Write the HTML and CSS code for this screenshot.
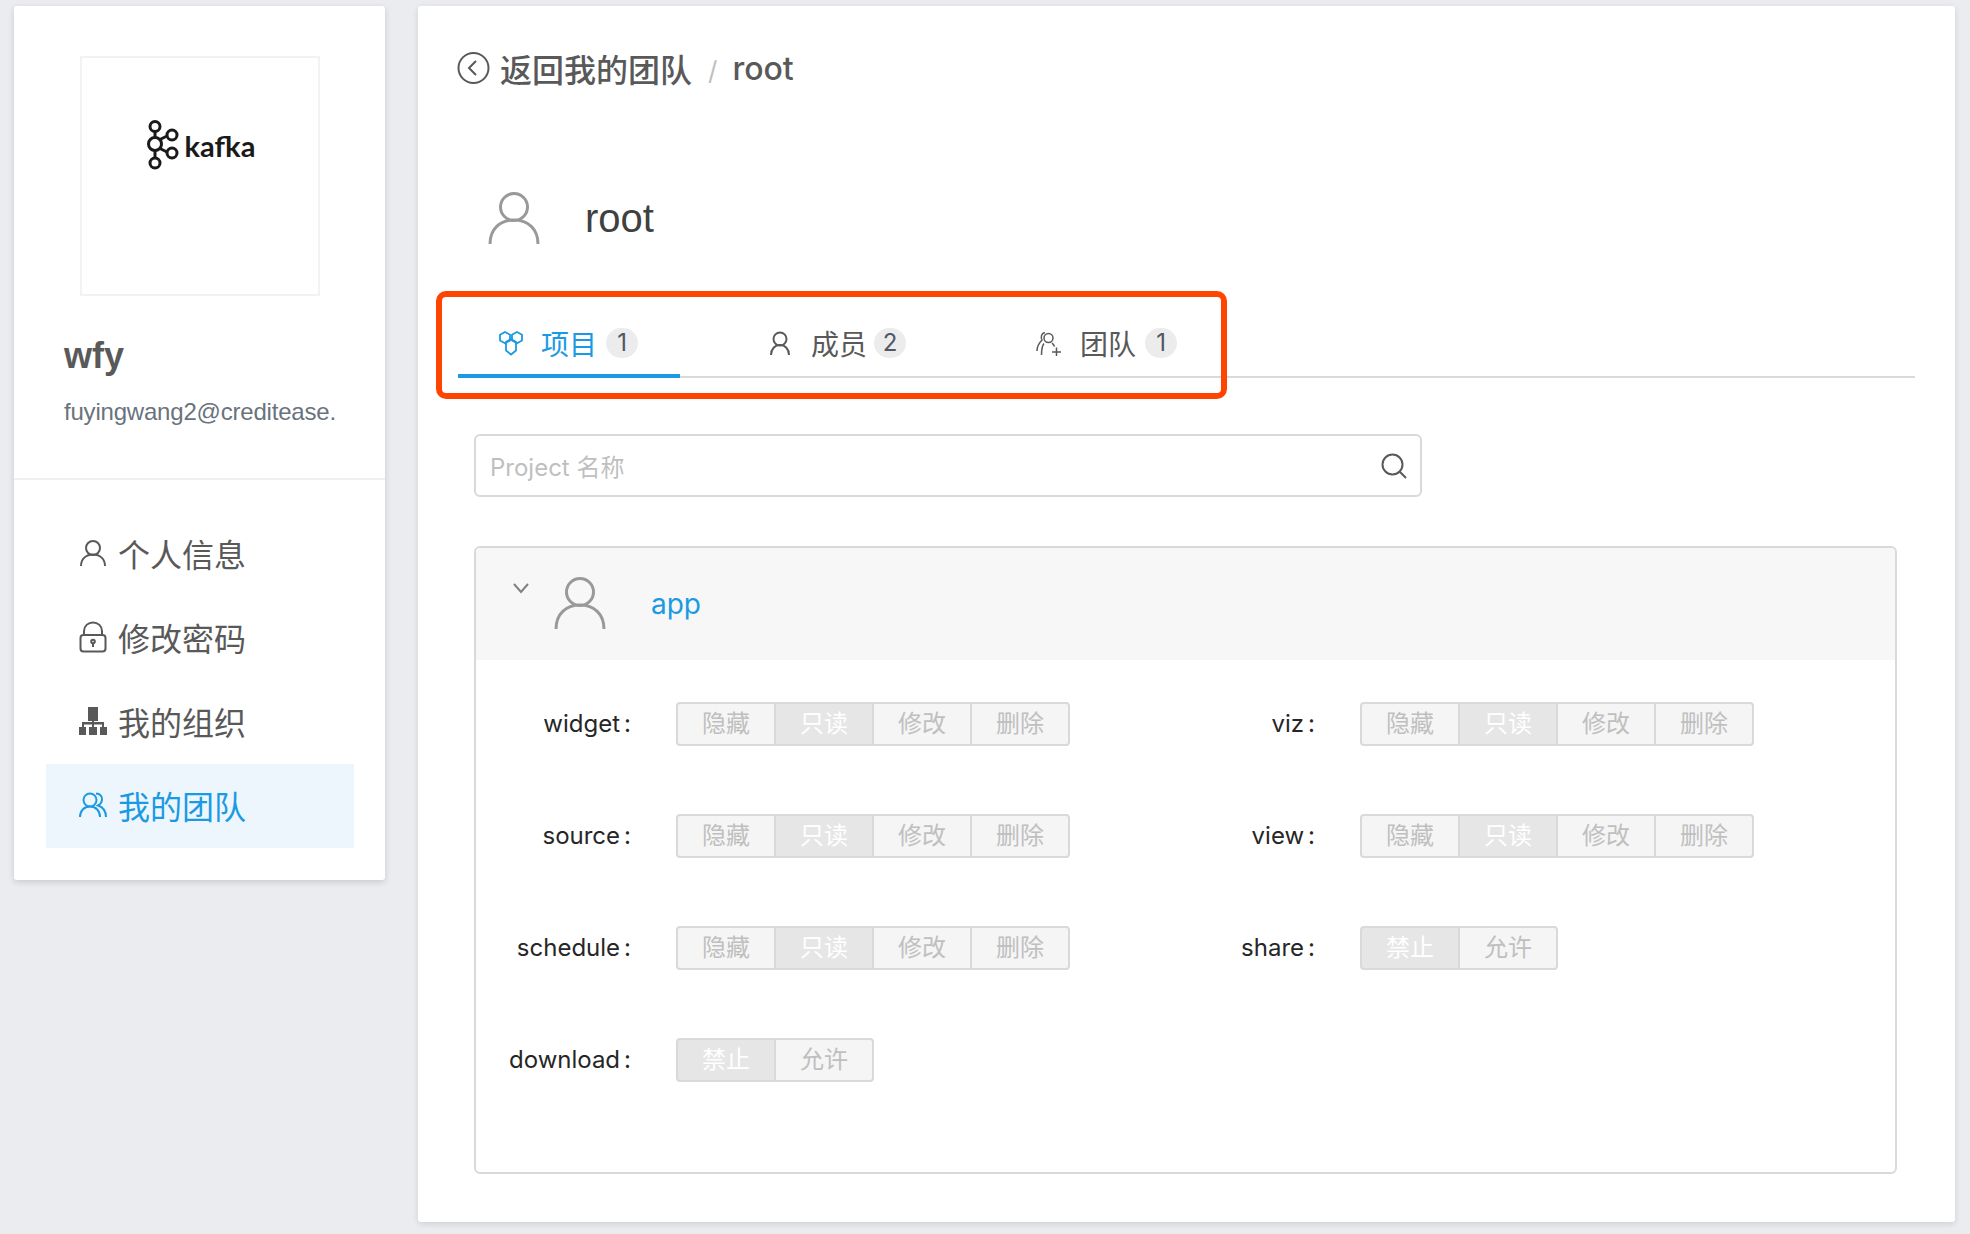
FILE: index.html
```html
<!DOCTYPE html>
<html lang="en">
<head>
    <meta charset="UTF-8">
    <title>我的团队</title>
    <link rel="stylesheet" href="styles.css">
</head>
<body>
    <aside class="sidebar">
        <section class="profile">
            <div class="avatar-box">
                <div class="logo">
                    <svg width="34" height="50" viewBox="0 0 34 50" fill="none" stroke="#1a1a1a" stroke-width="3">
                        <path d="M10 10V18M10 30V39M14 20L22 16M14 28L22 32"/>
                        <circle cx="10" cy="6.500" r="5"/>
                        <circle cx="10" cy="24" r="6.500"/>
                        <circle cx="10" cy="43" r="5"/>
                        <circle cx="27" cy="15" r="5"/>
                        <circle cx="27" cy="33" r="5"/>
                    </svg>
                    <span class="logo-text">kafka</span>
                </div>
            </div>
            <h2 class="user-name">wfy</h2>
            <p class="user-mail">fuyingwang2@creditease.</p>
        </section>
        <nav class="side-nav">
            <a class="nav-item">
                <svg class="nav-icon" width="28" height="28" viewBox="0 0 28 28" fill="none" stroke="currentColor" stroke-width="2">
                    <circle cx="14" cy="9" r="7"/>
                    <path d="M2 27C2 20 7 15.500 14 15.500S26 20 26 27"/>
                </svg>
                个人信息
            </a>
            <a class="nav-item">
                <svg class="nav-icon" width="28" height="32" viewBox="0 0 28 32" fill="none" stroke="currentColor" stroke-width="2">
                    <path d="M5 15V10C5 5 9 1.500 14 1.500S23 5 23 10V15"/>
                    <rect x="1.500" y="14" width="25" height="16.500" rx="3"/>
                    <circle cx="14" cy="20.500" r="1.800"/>
                    <path d="M14 22V26"/>
                </svg>
                修改密码
            </a>
            <a class="nav-item">
                <svg class="nav-icon" width="28" height="28" viewBox="0 0 28 28" fill="#595959">
                    <rect x="9" y="0" width="10" height="14"/>
                    <rect x="3" y="15" width="22" height="2.500"/>
                    <rect x="13" y="13" width="2" height="8"/>
                    <rect x="3" y="15" width="2" height="6"/>
                    <rect x="23" y="15" width="2" height="6"/>
                    <rect x="0" y="20" width="7" height="8"/>
                    <rect x="10" y="20" width="8" height="8"/>
                    <rect x="21" y="20" width="7" height="8"/>
                </svg>
                我的组织
            </a>
            <a class="nav-item active">
                <svg class="nav-icon" width="28" height="26" viewBox="0 0 28 26" fill="none" stroke="currentColor" stroke-width="2">
                    <circle cx="11" cy="8" r="6.500"/>
                    <path d="M1 25C1 19 5 14.500 11 14.500S21 19 21 25"/>
                    <path d="M17 1.500C21 1.500 23.500 4.500 23 8C22.700 10.500 21 12.500 19 13.500C23.500 15 27 19 27 25"/>
                </svg>
                我的团队
            </a>
        </nav>
    </aside>

    <main class="content">
        <div class="breadcrumb">
            <svg class="back-icon" width="33" height="32" viewBox="0 0 33 32" fill="none" stroke="#595959" stroke-width="2">
                <circle cx="16.500" cy="16" r="15"/>
                <path d="M19 9L12 16L19 23"/>
            </svg>
            <span class="crumb">返回我的团队</span>
            <span class="crumb-sep">/</span>
            <span class="crumb">root</span>
        </div>

        <header class="team-head">
            <svg width="52" height="53" viewBox="0 0 52 53" fill="none" stroke="#999" stroke-width="3">
                <circle cx="26" cy="15" r="13.500"/>
                <path d="M2 52C2 37 12 28 26 28S50 37 50 52"/>
            </svg>
            <h1 class="team-title">root</h1>
        </header>

        <div class="tabs">
            <div class="tab active">
                <svg class="tab-icon" width="26" height="26" viewBox="0 0 26 26" fill="none" stroke="currentColor" stroke-width="1.800">
                    <path d="M7 2L12 4.800V10.500L7 13.300L2 10.500V4.800Z"/>
                    <path d="M19 2L24 4.800V10.500L19 13.300L14 10.500V4.800Z"/>
                    <path d="M13 9L18 12V20.500L13 24.500L8 20.500V12Z"/>
                </svg>
                <span>项目</span>
                <span class="badge">1</span>
            </div>
            <div class="tab">
                <svg class="tab-icon" width="20" height="25" viewBox="0 0 20 25" fill="none" stroke="currentColor" stroke-width="2">
                    <circle cx="10" cy="8" r="6.500"/>
                    <path d="M1 24C1 18 5 14 10 14S19 18 19 24"/>
                </svg>
                <span>成员</span>
                <span class="badge">2</span>
            </div>
            <div class="tab">
                <svg class="tab-icon" width="25" height="25" viewBox="0 0 25 25" fill="none" stroke="currentColor" stroke-width="1.500">
                    <circle cx="12.500" cy="7" r="4.500"/>
                    <path d="M9 1.500C5.500 2 4.500 6 6 9C3 12 1 16 1 20M8 12.500C6 15 5.500 19 5.500 24M16 12C17 13 18 14 18.500 15.500"/>
                    <path d="M16 21H25M20.500 16.500V25"/>
                </svg>
                <span>团队</span>
                <span class="badge">1</span>
            </div>
        </div>

        <div class="search">
            <input class="search-input" type="text" placeholder="Project 名称">
            <svg width="26" height="26" viewBox="0 0 26 26" fill="none" stroke="#595959" stroke-width="2">
                <circle cx="11.500" cy="11.500" r="10"/>
                <path d="M18.500 18.500L25 25"/>
            </svg>
        </div>

        <section class="project-card">
            <div class="card-head">
                <svg class="chevron" width="16" height="11" viewBox="0 0 16 11" fill="none" stroke="#808080" stroke-width="2">
                    <path d="M1 1L8 9L15 1"/>
                </svg>
                <svg class="card-avatar" width="52" height="53" viewBox="0 0 52 53" fill="none" stroke="#999" stroke-width="3">
                    <circle cx="26" cy="15" r="13.500"/>
                    <path d="M2 52C2 37 12 28 26 28S50 37 50 52"/>
                </svg>
                <a class="project-name">app</a>
            </div>
            <div class="perm-grid">
                <div class="perm-row">
                    <label class="perm-label">widget<i>:</i></label>
                    <div class="btn-group"><span class="btn">隐藏</span><span class="btn on">只读</span><span class="btn">修改</span><span class="btn">删除</span></div>
                </div>
                <div class="perm-row">
                    <label class="perm-label">viz<i>:</i></label>
                    <div class="btn-group"><span class="btn">隐藏</span><span class="btn on">只读</span><span class="btn">修改</span><span class="btn">删除</span></div>
                </div>
                <div class="perm-row">
                    <label class="perm-label">source<i>:</i></label>
                    <div class="btn-group"><span class="btn">隐藏</span><span class="btn on">只读</span><span class="btn">修改</span><span class="btn">删除</span></div>
                </div>
                <div class="perm-row">
                    <label class="perm-label">view<i>:</i></label>
                    <div class="btn-group"><span class="btn">隐藏</span><span class="btn on">只读</span><span class="btn">修改</span><span class="btn">删除</span></div>
                </div>
                <div class="perm-row">
                    <label class="perm-label">schedule<i>:</i></label>
                    <div class="btn-group"><span class="btn">隐藏</span><span class="btn on">只读</span><span class="btn">修改</span><span class="btn">删除</span></div>
                </div>
                <div class="perm-row">
                    <label class="perm-label">share<i>:</i></label>
                    <div class="btn-group"><span class="btn on">禁止</span><span class="btn">允许</span></div>
                </div>
                <div class="perm-row">
                    <label class="perm-label">download<i>:</i></label>
                    <div class="btn-group"><span class="btn on">禁止</span><span class="btn">允许</span></div>
                </div>
            </div>
        </section>
    </main>

    <div class="annotation"></div>
</body>
</html>
```

FILE: styles.css
```css
* {
    box-sizing: border-box;
}
body {
    margin: 0;
    height: 1234px;
    overflow: hidden;
    padding: 6px 0 0 14px;
    display: flex;
    align-items: flex-start;
    gap: 33px;
    background-color: #eaecf0;
    color: #595959;
    font-family: "Liberation Sans", "Noto Sans CJK SC", sans-serif;
}
.sidebar {
    width: 371px;
    background: #fff;
    border-radius: 3px;
    box-shadow: 0 2px 6px rgba(0, 0, 0, 0.15);
}
.profile {
    height: 474px;
    padding: 50px 0 0 50px;
    border-bottom: 2px solid #f0f0f0;
}
.avatar-box {
    width: 240px;
    height: 240px;
    margin-left: 16px;
    padding-top: 62px;
    border: 2px solid #f2f2f2;
    display: flex;
    justify-content: center;
    align-items: flex-start;
}
.logo {
    display: flex;
    align-items: center;
    gap: 6px;
}
.logo-text {
    font-family: Lato, sans-serif;
    font-size: 29px;
    font-weight: 700;
    color: #1a1a1a;
}
.user-name {
    margin: 36px 0 0;
    font-size: 36px;
    line-height: 48px;
    color: #595959;
}
.user-mail {
    margin: 16px 0 0;
    font-size: 24px;
    line-height: 32px;
    color: #6a737d;
    letter-spacing: -0.2px;
}
.side-nav {
    padding: 32px 31px 32px 32px;
}
.nav-item {
    height: 84px;
    padding: 0 0 2px 33px;
    display: flex;
    align-items: center;
    font-size: 32px;
    color: #595959;
}
.nav-icon {
    margin-right: 11px;
    flex: none;
}
.nav-item.active {
    background: #eef6fd;
    color: #1b9ae4;
}
.content {
    width: 1537px;
    height: 1216px;
    padding: 40px 0 0;
    background: #fff;
    border-radius: 3px;
    box-shadow: 0 2px 6px rgba(0, 0, 0, 0.12);
    font-family: Inter, "Noto Sans CJK SC", sans-serif;
}
.breadcrumb {
    height: 44px;
    margin-left: 39px;
    display: flex;
    align-items: center;
    font-size: 32px;
    font-weight: 500;
    color: #595959;
}
.back-icon {
    margin-right: 10px;
}
.crumb-sep {
    margin: 4px 15px 0 16px;
    font-size: 26px;
    font-weight: 400;
    color: #bfbfbf;
}
.team-head {
    height: 54px;
    margin: 101px 0 0 70px;
    display: flex;
    align-items: center;
    gap: 45px;
}
.team-title {
    margin: 0;
    font-family: "Liberation Sans", sans-serif;
    font-size: 40px;
    font-weight: 400;
    color: #404040;
}
.tabs {
    width: 1457px;
    height: 78px;
    margin: 55px 0 0 40px;
    padding-top: 12px;
    border-bottom: 2px solid #d9d9d9;
    display: flex;
    gap: 50px;
}
.tab {
    height: 66px;
    padding: 0 40px 4px;
    display: flex;
    align-items: center;
    font-size: 28px;
    color: #595959;
}
.tab.active {
    padding: 0 42px 0 40px;
    color: #1b9ae4;
    border-bottom: 4px solid #1b9ae4;
}
.tab-icon {
    margin-right: 17px;
    flex: none;
}
.tab:nth-child(2) .tab-icon {
    margin-right: 21px;
}
.tab:nth-child(3) .tab-icon {
    margin-right: 19px;
}
.badge {
    width: 32px;
    height: 30px;
    margin-left: 9px;
    border-radius: 15px;
    background: #ececec;
    color: #4f5764;
    font-size: 24px;
    line-height: 30px;
    text-align: center;
}
.tab:nth-child(2) .badge {
    margin-left: 7px;
}
.search {
    width: 948px;
    height: 63px;
    margin: 56px 0 0 56px;
    padding: 0 13px 0 14px;
    border: 2px solid #d9d9d9;
    border-radius: 6px;
    display: flex;
    align-items: center;
}
.search-input {
    flex: 1;
    border: none;
    outline: none;
    padding: 3px 0 0;
    font-family: inherit;
    font-size: 24px;
    color: #595959;
}
.search-input::placeholder {
    color: #bfbfbf;
}
.project-card {
    width: 1423px;
    height: 628px;
    margin: 49px 0 0 56px;
    border: 2px solid #d9d9d9;
    border-radius: 6px;
}
.card-head {
    height: 112px;
    padding: 31px 0 0 37px;
    background: #f7f7f7;
    border-radius: 4px 4px 0 0;
    display: flex;
    align-items: flex-start;
}
.chevron {
    margin: 4px 0 0 0;
    flex: none;
}
.card-avatar {
    margin-left: 25px;
    margin-top: -2px;
    flex: none;
}
.project-name {
    margin: 7px 0 0 45px;
    font-size: 28px;
    line-height: 36px;
    color: #1b9ae4;
}
.perm-grid {
    padding-top: 42px;
    display: grid;
    grid-template-columns: 684px 684px;
    grid-auto-rows: 44px;
    row-gap: 68px;
}
.perm-row {
    display: flex;
    align-items: center;
}
.perm-label {
    width: 155px;
    margin-right: 45px;
    padding-bottom: 2px;
    text-align: right;
    font-size: 24px;
    color: #262626;
}
.perm-label i {
    margin-left: 4px;
    font-style: normal;
}
.btn-group {
    display: flex;
}
.btn {
    width: 100px;
    height: 44px;
    margin-left: -2px;
    border: 2px solid #d9d9d9;
    background: #f5f5f5;
    color: #bfbfbf;
    font-size: 24px;
    line-height: 39px;
    text-align: center;
}
.btn:first-child {
    margin-left: 0;
    border-radius: 4px 0 0 4px;
}
.btn:last-child {
    border-radius: 0 4px 4px 0;
}
.btn.on {
    background: #e6e6e6;
    color: #fff;
}
.annotation {
    position: absolute;
    left: 436px;
    top: 291px;
    width: 791px;
    height: 108px;
    border: 6px solid #ff4400;
    border-radius: 10px;
}
```
